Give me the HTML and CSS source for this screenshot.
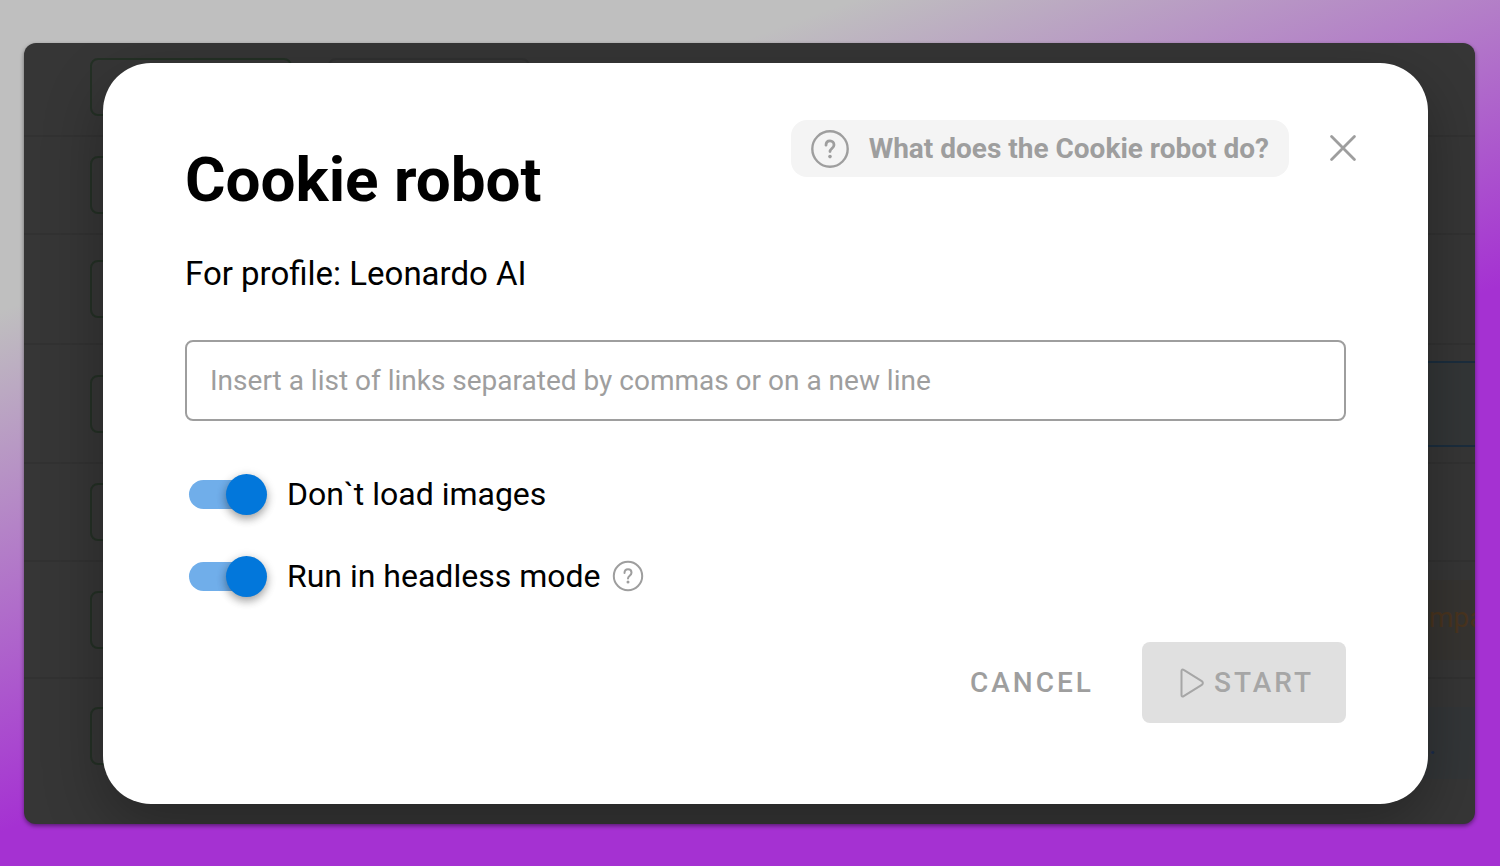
FILE: index.html
```html
<!DOCTYPE html>
<html lang="en">
<head>
  <meta charset="UTF-8" />
  <meta name="viewport" content="width=device-width, initial-scale=1" />
  <title>Cookie robot</title>
  <link rel="stylesheet" href="styles.css">
</head>
<body>
  <div class="app">
    <!-- Dimmed profile list behind the dialog -->
    <div class="profiles" aria-hidden="true">
      <div class="profile"><span class="run-btn"></span><span class="run-btn muted"></span></div>
      <div class="profile"><span class="run-btn"></span></div>
      <div class="profile"><span class="run-btn"></span></div>
      <div class="profile"><span class="run-btn"></span><span class="tag tag-selected"></span></div>
      <div class="profile"><span class="run-btn"></span></div>
      <div class="profile"><span class="run-btn"></span><span class="tag tag-orange">mpa</span></div>
      <div class="profile"><span class="run-btn"></span><span class="tag tag-blue">.</span></div>
    </div>

    <form class="modal" role="dialog" aria-labelledby="modal-title">
      <header class="modal-header">
        <h1 id="modal-title">Cookie robot</h1>
        <button type="button" class="help-btn">
          <svg width="38" height="38" viewBox="0 0 38 38" fill="none" stroke="currentColor" stroke-width="2.4" stroke-linecap="round" stroke-linejoin="round">
            <circle cx="19" cy="19" r="17.7"/>
            <path stroke-width="2.8" d="M15 15.2c0-2.7 1.7-4.4 4-4.4s4 1.7 4 4.1c0 3.5-4 3.7-4 6.7"/>
            <circle cx="19" cy="26.6" r="1.8" fill="currentColor" stroke="none"/>
          </svg>
          What does the Cookie robot do?
        </button>
        <button type="button" class="close-btn" aria-label="Close">
          <svg width="26" height="26" viewBox="0 0 26 26" fill="none" stroke="currentColor" stroke-width="2.8" stroke-linecap="round">
            <path d="M1.6 1.6l22.8 22.8M24.4 1.6L1.6 24.4"/>
          </svg>
        </button>
      </header>

      <p class="profile-name">For profile: Leonardo AI</p>

      <input type="text" class="links-input" aria-label="List of links" placeholder="Insert a list of links separated by commas or on a new line">

      <div class="switches">
        <div class="switch-row">
          <input type="checkbox" class="switch" id="no-images" checked>
          <label for="no-images">Don`t load images</label>
        </div>
        <div class="switch-row">
          <input type="checkbox" class="switch" id="headless" checked>
          <label for="headless">Run in headless mode</label>
          <svg class="hint" width="32" height="32" viewBox="0 0 32 32" fill="none" stroke="currentColor" stroke-width="2" stroke-linecap="round" stroke-linejoin="round">
            <circle cx="16" cy="16" r="14.2"/>
            <path d="M12.5 13c0-2.3 1.5-3.7 3.5-3.7s3.5 1.4 3.5 3.4c0 2.9-3.5 3.1-3.5 5.7"/>
            <circle cx="16" cy="22" r="1.5" fill="currentColor" stroke="none"/>
          </svg>
        </div>
      </div>

      <footer class="actions">
        <button type="button" class="btn">CANCEL</button>
        <button type="submit" class="btn btn-start" disabled>
          <svg width="24" height="30" viewBox="0 0 24 30" fill="none" stroke="currentColor" stroke-width="2" stroke-linejoin="round">
            <path d="M1.5 3v24c0 1.5 1 2 2.2 1.2l18.1-11.4c1.4-.9 1.4-2.7 0-3.6L3.7 1.8C2.5 1 1.5 1.5 1.5 3z"/>
          </svg>
          START
        </button>
      </footer>
    </form>
  </div>
</body>
</html>
```
FILE: styles.css
```css
* {
  box-sizing: border-box;
}

body {
  margin: 0;
  min-height: 100vh;
  padding: 43px 25px 42px 24px;
  background: linear-gradient(160deg, #bfbfbf 22%, #a531d2 59%) #a531d2;
  font-family: Roboto, "Liberation Sans", sans-serif;
  font-size: 32px;
  line-height: 40px;
  color: #000;
}

button,
input {
  font-family: inherit;
}

button {
  border: none;
  background: none;
  color: #9e9e9e;
  cursor: pointer;
}

svg {
  display: block;
  flex-shrink: 0;
}

/* the list and the dialog share one grid cell */
.app {
  display: grid;
  border-radius: 12px;
  background-color: #363636;
  box-shadow: 0 2px 4px rgba(0, 0, 0, 0.45);
  overflow: hidden;
}

.profiles,
.modal {
  grid-area: 1 / 1;
  min-width: 0;
}

/* Profile list */
.profiles {
  display: grid;
  grid-template-rows: 94px 98px 110px 119px 98px 117px 1fr;
  overflow: hidden;
}

.profile {
  display: flex;
  align-items: center;
  gap: 36px;
  padding-left: 66px;
  border-bottom: 2px solid #323232;
}

.profile:first-child {
  align-items: flex-start;
  padding-top: 15px;
}

.profile:last-child {
  align-items: flex-start;
  padding-top: 28px;
  border-bottom: none;
}

.run-btn {
  width: 202px;
  height: 58px;
  border: 2px solid #243025;
  border-radius: 8px;
}

.muted {
  border-color: #303131;
}

.tag {
  width: 120px;
  height: 80px;
  margin-left: auto;
  padding-left: 74px;
  font-size: 28px;
  line-height: 76px;
  overflow: hidden;
}

.tag-selected {
  height: 86px;
  border: 2px solid #1b2d3d;
  border-right: none;
  background-color: #333637;
}

.tag-orange {
  background-color: #363431;
  color: #49341f;
}

.tag-blue {
  height: 72px;
  background-color: #333638;
  color: #1b2d4d;
}

/* Dialog */
.modal {
  margin: 20px 47px 20px 79px;
  padding: 57px 82px 81px;
  border-radius: 48px;
  background-color: #fff;
  box-shadow: 0 20px 60px rgba(0, 0, 0, 0.3);
}

.modal-header {
  display: flex;
  align-items: flex-start;
  margin-right: -10px;
}

h1 {
  margin: 24px auto 0 0;
  font-size: 62px;
  line-height: 72px;
}

.help-btn {
  display: flex;
  align-items: center;
  gap: 20px;
  min-height: 57px;
  padding: 8px 20px;
  border-radius: 16px;
  background-color: #f4f4f4;
  font-size: 28px;
  font-weight: 700;
}

.close-btn {
  margin-left: 41px;
  padding: 15px 0;
}

.profile-name {
  margin: 38px 0 46px;
  font-size: 33px;
}

.links-input {
  display: block;
  width: 100%;
  height: 81px;
  padding: 0 23px;
  border: 2px solid #9e9e9e;
  border-radius: 8px;
  background: none;
  font-size: 28px;
}

.links-input::placeholder {
  color: #9e9e9e;
  opacity: 1;
}

.switches {
  display: grid;
  gap: 42px;
  margin: 53px 0 46px;
}

.switch-row {
  display: flex;
  align-items: center;
  padding-left: 4px;
}

.switch {
  appearance: none;
  display: flex;
  align-items: center;
  justify-content: flex-end;
  width: 73px;
  height: 29px;
  margin: 0 25px 0 0;
  border-radius: 15px;
  background-color: #70aeea;
  cursor: pointer;
}

.switch::before {
  content: "";
  flex-shrink: 0;
  width: 41px;
  height: 41px;
  margin-right: -5px;
  border-radius: 50%;
  background-color: #0277db;
  box-shadow: 0 4px 8px rgba(0, 0, 0, 0.3), 0 2px 12px rgba(0, 0, 0, 0.12);
}

.switch:not(:checked) {
  justify-content: flex-start;
  background-color: #bdbdbd;
}

.hint {
  margin-left: 12px;
  color: #9e9e9e;
}

.actions {
  display: flex;
  justify-content: flex-end;
  gap: 16px;
}

.btn {
  display: flex;
  align-items: center;
  gap: 10px;
  min-height: 81px;
  padding: 0 32px;
  border-radius: 8px;
  font-size: 28px;
  font-weight: 500;
  letter-spacing: 3px;
}

.btn-start {
  padding: 0 32px 0 38px;
  background-color: #e0e0e0;
  color: #a6a6a6;
  cursor: default;
}
```
